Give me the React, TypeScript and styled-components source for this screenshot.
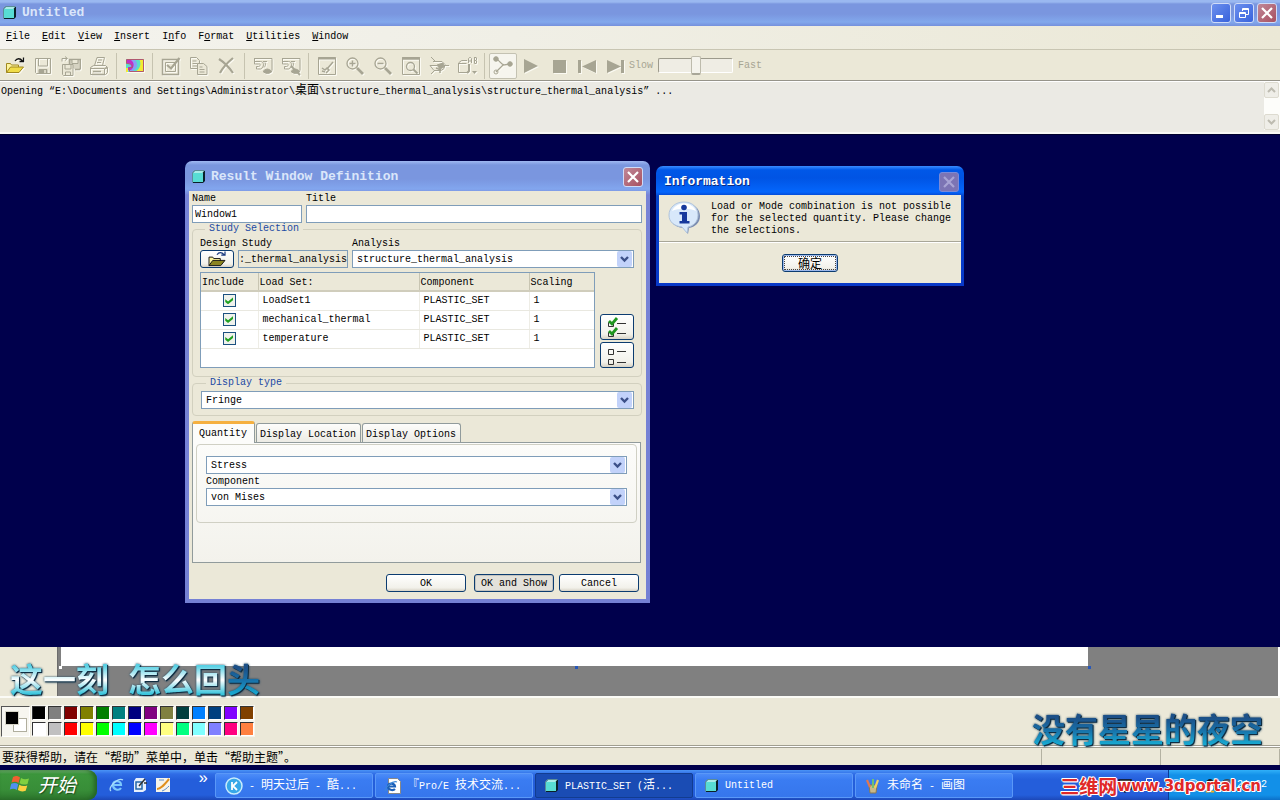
import React from "react";
import styled, { createGlobalStyle, css } from "styled-components";

const MONO = `"Liberation Mono", "Noto Sans CJK SC", monospace`;
const CJK = `"Noto Sans CJK SC", "Liberation Sans", sans-serif`;

const GlobalStyle = createGlobalStyle`
  *, *::before, *::after { box-sizing: border-box; }
  body { margin: 0; background: #00004c; }
  button, input, select { font: inherit; color: inherit; margin: 0; }
`;

/* ---------- text helpers ---------- */

const Han = styled.span`
  font-family: ${CJK};
  font-size: 12px;
  line-height: 12px;
`;

const mixed = (text: string) =>
  text
    .split(/([\u3000-\u30ff\u4e00-\u9fff]+)/)
    .filter(Boolean)
    .map((part, i) => (/[\u3000-\u30ff\u4e00-\u9fff]/.test(part) ? <Han key={i}>{part}</Han> : part));

/* ---------- application shell ---------- */

const Desktop = styled.div`
  display: flex;
  flex-direction: column;
  min-height: 100vh;
  font-family: ${MONO};
  font-size: 10px;
  line-height: 12px;
  color: #000;
`;

const TitleBar = styled.header`
  display: flex;
  align-items: center;
  gap: 3px;
  height: 26px;
  padding: 0 3px;
  background: linear-gradient(#9ab8f0 0, #9ab8f0 2px, #7a96df 4px, #7a96df 14px, #82a8ec 22px, #7590dc 26px);
`;

const TitleText = styled.h1<{ $active?: boolean }>`
  flex: 1;
  margin: 0;
  padding-left: 2px;
  font-size: 13px;
  line-height: 16px;
  font-weight: bold;
  white-space: nowrap;
  color: ${(p) => (p.$active ? "#fff" : "#dae6fa")};
  text-shadow: ${(p) => (p.$active ? "1px 1px 0 #0a2a80" : "none")};
`;

const CaptionButton = styled.button<{ $kind: "blue" | "red" | "dim" }>`
  display: grid;
  place-items: center;
  width: 20px;
  height: 20px;
  padding: 0;
  border: 1px solid ${(p) => (p.$kind === "dim" ? "#7a8ad8" : "#d0dcf8")};
  border-radius: 3px;
  background: ${(p) =>
    p.$kind === "blue"
      ? "linear-gradient(135deg, #6c90ee, #3862dc)"
      : p.$kind === "red"
      ? "linear-gradient(135deg, #c08898, #a85060)"
      : "#7c74b4"};
`;

const MenuBar = styled.nav`
  display: flex;
  align-items: center;
  gap: 12px;
  height: 23px;
  padding: 0 6px 1px;
  background: linear-gradient(90deg, #f4f3ee 0, #f0efe6 40%, #ebe8d6 100%);
`;

const MenuItem = styled.button`
  padding: 0;
  border: 0;
  background: none;
  line-height: 14px;
`;

const ToolBar = styled.div`
  display: flex;
  align-items: center;
  height: 32px;
  padding: 1px 0 0 1px;
  border-top: 1px solid #c8c5b2;
  border-bottom: 1px solid #96948a;
  background: #ebe8d7;
  color: #a7a593;
`;

const ToolButton = styled.button<{ $on?: boolean }>`
  display: grid;
  place-items: center;
  flex: none;
  width: 28px;
  height: 26px;
  padding: 0;
  border: 1px solid ${(p) => (p.$on ? "#c4c2b2" : "transparent")};
  border-radius: 2px;
  background: ${(p) => (p.$on ? "#f6f5ee" : "none")};
  & svg { filter: drop-shadow(1px 1px 0 #fbfaf2); }
`;

const ToolSeparator = styled.span`
  flex: none;
  width: 1px;
  height: 26px;
  margin: 0 4px 0 3px;
  background: #c6c3b0;
`;

const SpeedControl = styled.label`
  display: flex;
  align-items: center;
  gap: 5px;
`;

const SpeedSlider = styled.input`
  appearance: none;
  width: 75px;
  height: 15px;
  background: #efede4;
  border: 1px solid #fff;
  border-top-color: #9c9a8c;
  border-left-color: #9c9a8c;
  border-radius: 2px;
  &::-webkit-slider-thumb {
    appearance: none;
    width: 10px;
    height: 19px;
    border: 1px solid #bdbbac;
    border-bottom: 2px solid #a8a698;
    border-radius: 2px;
    background: #f4f3ec;
  }
`;

const MessageArea = styled.section`
  display: flex;
  justify-content: space-between;
  height: 53px;
  padding-left: 1px;
  border-top: 1px solid #fff;
  border-bottom: 2px solid #f8f8f4;
  background: #ebeae4;
`;

const MessageText = styled.p`
  margin: 1px 0 0;
`;

const ScrollBar = styled.div`
  display: flex;
  flex-direction: column;
  justify-content: space-between;
  width: 16px;
  height: 48px;
  background: #fdfdfa;
`;

const ScrollButton = styled.button`
  display: grid;
  place-items: center;
  width: 15px;
  height: 16px;
  padding: 0;
  border: 1px solid #dddbd0;
  border-radius: 2px;
  background: #efeee8;
`;

const ResultCanvas = styled.main`
  position: relative;
  flex: 1;
  min-height: 480px;
  border-top: 1px solid #00002c;
  background: #00004c;
`;

/* ---------- result window dialog ---------- */

const DialogFrame = styled.section`
  position: absolute;
  left: 185px;
  top: 26px;
  width: 465px;
  padding: 0 4px 4px;
  border-radius: 7px 7px 0 0;
  background: linear-gradient(#a0b8f2 0, #7a96df 4px, #7a96df 18px, #82a6ee 28px, #7783d6 34px, #7480d4 100%);
`;

const DialogTitle = styled.header`
  display: flex;
  align-items: center;
  gap: 3px;
  height: 30px;
  padding: 2px 3px 0 3px;
`;

const DialogBody = styled.form`
  padding: 2px 4px 7px 3px;
  background: #ebe8d8;
`;

const FieldRow = styled.div`
  display: flex;
  align-items: flex-end;
  gap: 4px;
`;

const Field = styled.label<{ $width?: number }>`
  display: flex;
  flex-direction: column;
  flex: ${(p) => (p.$width ? `0 0 ${p.$width}px` : "1")};
  min-width: 0;
`;

const boxed = css`
  width: 100%;
  height: 18px;
  border: 1px solid #7f9db9;
  border-radius: 0;
  outline: 0;
`;

const TextBox = styled.input<{ $muted?: boolean }>`
  ${boxed}
  padding: 0 ${(p) => (p.$muted ? 0 : 2)}px;
  background: ${(p) => (p.$muted ? "#ebe8d8" : "#fff")};
`;

const Group = styled.fieldset<{ $pad: string }>`
  min-width: 0;
  margin: 0;
  padding: ${(p) => p.$pad};
  border: 1px solid #d2d0bf;
  border-radius: 4px;
`;

const Legend = styled.legend`
  margin-left: 5px;
  padding: 0 4px;
  line-height: 12px;
  color: #1c4aa4;
`;

const SelectWrap = styled.span`
  position: relative;
  display: block;
  & svg {
    position: absolute;
    top: 1px;
    right: 2px;
    pointer-events: none;
  }
`;

const SelectBox = styled.select`
  ${boxed}
  display: block;
  appearance: none;
  padding: 2px 20px 0 4px;
  background: #fff;
`;

const PushButton = styled.button<{ $width: number; $height?: number; $pressed?: boolean; $focus?: boolean }>`
  display: grid;
  place-items: center;
  flex: none;
  width: ${(p) => p.$width}px;
  height: ${(p) => p.$height ?? 18}px;
  padding: 0;
  border: 1px solid #0c3c70;
  border-radius: 3px;
  background: ${(p) => (p.$pressed ? "#e3e1da" : "linear-gradient(#fff, #f2f1ea 80%, #d8d3c6)")};
  box-shadow: ${(p) => (p.$focus ? "inset 0 0 0 1px #9cb8ec" : p.$pressed ? "inset 0 0 0 1px #c4c4c0" : "none")};
  outline: ${(p) => (p.$focus ? "1px dotted #444" : "0")};
  outline-offset: -3px;
`;

const LoadArea = styled.div`
  display: flex;
  align-items: flex-end;
  gap: 5px;
  margin-top: 4px;
`;

const LoadTableBox = styled.div`
  flex: 1;
  height: 96px;
  border: 1px solid #7f9db9;
  background: #fff;
`;

const LoadTable = styled.table`
  width: 100%;
  table-layout: fixed;
  border-collapse: collapse;
  & th, & td { padding: 0; text-align: left; font-weight: normal; overflow: hidden; }
  & th {
    height: 18px;
    padding: 2px 0 0 1px;
    background: #ebe8d8;
    border-right: 1px solid #c8c5b2;
    border-bottom: 2px solid #d0cdbc;
  }
  & th:last-child, & td:last-child { border-right: 0; }
  & td {
    height: 19px;
    padding-left: 4px;
    border-right: 1px solid #eeede6;
    border-bottom: 1px solid #e9e8e0;
  }
  & td:first-child { padding: 0; text-align: center; }
`;

const CheckBox = styled.input`
  appearance: none;
  display: inline-grid;
  place-items: center;
  width: 13px;
  height: 13px;
  vertical-align: middle;
  border: 1px solid #1c5180;
  background: #f0f2ec;
  &:checked::after {
    content: "";
    width: 8px;
    height: 7px;
    background: #21a121;
    clip-path: polygon(0 30%, 35% 62%, 100% 0, 100% 40%, 35% 100%, 0 70%);
  }
`;

const SideButtons = styled.div`
  display: flex;
  flex-direction: column;
  gap: 2px;
`;

const Tabs = styled.div`
  display: flex;
  align-items: flex-end;
  gap: 1px;
  height: 21px;
  margin-top: 5px;
`;

const Tab = styled.button<{ $active?: boolean }>`
  height: ${(p) => (p.$active ? 22 : 19)}px;
  margin-bottom: ${(p) => (p.$active ? -1 : 0)}px;
  padding: ${(p) => (p.$active ? "0 7px 0 6px" : "3px 4px 0 3px")};
  border: 1px solid #919b9c;
  border-bottom: 0;
  border-radius: 3px 3px 0 0;
  white-space: nowrap;
  line-height: 12px;
  background: ${(p) => (p.$active ? "#fcfcfa" : "linear-gradient(#fdfdfb, #ecebe4)")};
  ${(p) => p.$active && "border-top: 3px solid #f5b040; position: relative; z-index: 1;"}
`;

const TabPanel = styled.div`
  height: 121px;
  margin-right: 1px;
  padding: 1px 3px;
  border: 1px solid #919b9c;
  background: linear-gradient(#fcfcfa, #f3f2ec);
`;

const QuantityGroup = styled.div`
  display: flex;
  flex-direction: column;
  height: 79px;
  padding: 11px 9px 0;
  border: 1px solid #d0d0c4;
  border-radius: 4px;
`;

const FieldLabel = styled.span`
  display: block;
  padding-top: 2px;
`;

const DialogActions = styled.footer`
  display: flex;
  justify-content: flex-end;
  gap: 5px;
  padding: 11px 3px 0 0;
  & button { padding-top: 1px; }
  & button:nth-child(2) { margin-left: 3px; }
`;

/* ---------- information dialog ---------- */

const InfoFrame = styled.section`
  position: absolute;
  left: 656px;
  top: 31px;
  width: 308px;
  padding: 0 3px 3px;
  border-radius: 7px 7px 0 0;
  background: linear-gradient(#3a8cff 0, #0058e8 4px, #0054e4 12px, #0466fc 26px, #0444cc 30px, #0838c8 100%);
`;

const InfoTitle = styled.header`
  display: flex;
  align-items: center;
  height: 29px;
  padding: 2px 2px 0 3px;
`;

const InfoMessage = styled.div`
  display: flex;
  gap: 9px;
  height: 47px;
  padding: 6px 9px 0;
  border-bottom: 1px solid #a8a698;
  background: #ebe8d8;
  & p { margin: 0; }
`;

const InfoActions = styled.footer`
  display: flex;
  justify-content: center;
  height: 41px;
  padding-top: 11px;
  border-top: 1px solid #fff;
  background: #ebe8d8;
`;

/* ---------- paint window behind ---------- */

const PaintStrip = styled.section`
  display: flex;
  height: 49px;
  background: #808080;
  border-right: 2px solid #fff;
`;

const PaintTools = styled.div`
  width: 58px;
  border-right: 1px solid #6c6c6c;
  background: #ebe8d8;
`;

const PaintWorkspace = styled.div`
  flex: 1;
  padding: 0 190px 0 3px;
`;

const PaintPage = styled.div`
  position: relative;
  height: 19px;
  background: #fff;
`;

const PageHandle = styled.i<{ $side: string; $color?: string }>`
  position: absolute;
  top: 19px;
  ${(p) => p.$side}
  width: 3px;
  height: 3px;
  background: ${(p) => p.$color ?? "#2858b8"};
`;

const ColorBox = styled.section`
  display: flex;
  gap: 2px;
  height: 50px;
  padding: 8px 1px 0;
  border-top: 2px solid #fbfbf6;
  border-bottom: 1px solid #a09e90;
  background: #ebe8d8;
`;

const CurrentColors = styled.div`
  position: relative;
  width: 29px;
  height: 31px;
  border: 1px solid #fff;
  border-top-color: #555;
  border-left-color: #555;
  background: #f7f6f0;
`;

const CurrentColor = styled.span<{ $back?: boolean }>`
  position: absolute;
  left: ${(p) => (p.$back ? 11 : 3)}px;
  top: ${(p) => (p.$back ? 11 : 4)}px;
  width: 14px;
  height: 14px;
  border: 1px solid ${(p) => (p.$back ? "#b0ae9e" : "#d8d6c8")};
  background: ${(p) => (p.$back ? "#fff" : "#000")};
`;

const Swatches = styled.div`
  display: grid;
  grid-template-columns: repeat(14, 14px);
  grid-auto-rows: 14px;
  gap: 2px;
`;

const Swatch = styled.button<{ $color: string }>`
  padding: 0;
  border: 1px solid #fff;
  border-top-color: #333;
  border-left-color: #333;
  outline: 1px solid #f6f5ee;
  background: ${(p) => p.$color};
`;

const StatusBar = styled.div`
  display: flex;
  height: 19px;
  border-top: 1px solid #fff;
  background: #ebe8d8;
  box-shadow: inset 0 1px 0 #a09e90;
  font-family: ${CJK};
  font-size: 12px;
  line-height: 16px;
  white-space: nowrap;
`;

const StatusCell = styled.div<{ $width?: number }>`
  flex: ${(p) => (p.$width ? `0 0 ${p.$width}px` : "1")};
  min-width: 0;
  overflow: hidden;
  margin-top: 2px;
  padding: 0 2px;
  border-right: 1px solid #b4b2a2;
`;

/* ---------- taskbar ---------- */

const TaskBar = styled.footer`
  position: relative;
  display: flex;
  height: 35px;
  border-top: 5px solid #00004c;
  background: linear-gradient(#4a94f6 0, #2f6ce6 4px, #245edb 10px, #245edb 25px, #1c48b8 30px);
  color: #fff;
`;

const StartButton = styled.button`
  display: flex;
  align-items: center;
  gap: 7px;
  flex: none;
  width: 97px;
  height: 30px;
  padding: 0 0 2px 9px;
  border: 0;
  border-radius: 0 9px 9px 0;
  background: linear-gradient(#78b878 0, #3c963c 4px, #388e38 20px, #2c742c 30px);
  box-shadow: inset -3px 0 4px #246424;
  font: italic 19px/24px ${CJK};
  color: #fff;
  text-shadow: 1px 1px 1px #1c4c1c;
`;

const QuickLaunch = styled.div`
  display: flex;
  align-items: center;
  gap: 7px;
  flex: none;
  width: 117px;
  padding-left: 12px;
`;

const MoreMark = styled.span`
  margin-left: auto;
  padding: 0 6px 12px 0;
  font-size: 16px;
`;

const TaskButton = styled.button<{ $active?: boolean }>`
  display: flex;
  align-items: center;
  gap: 6px;
  flex: 0 1 158px;
  min-width: 0;
  height: 25px;
  margin: 3px 1px 0;
  padding: 0 9px;
  overflow: hidden;
  border: 1px solid ${(p) => (p.$active ? "#123c90" : "#5a98f8")};
  border-radius: 2px;
  white-space: nowrap;
  background: ${(p) => (p.$active ? "#1a4cb4" : "linear-gradient(#4c8cf8, #3a7cf2 6px, #3676ec)")};
`;

const Tray = styled.div`
  display: flex;
  align-items: center;
  justify-content: flex-end;
  gap: 3px;
  margin-left: auto;
  padding-right: 13px;
  width: 112px;
  flex: none;
  border-left: 1px solid #0c3c98;
  background: linear-gradient(#30b0f8 0, #1290e8 5px, #1290e8 25px, #0c70c8 30px);
`;

const LanguageBar = styled.div`
  display: flex;
  align-items: center;
  gap: 9px;
  margin-left: auto;
  padding-right: 14px;
  & + div { margin-left: 0; }
`;

const Watermark = styled.div`
  position: absolute;
  right: 19px;
  bottom: 4px;
  display: flex;
  align-items: center;
  font: bold 15px/20px "DejaVu Sans", "Noto Sans CJK SC", sans-serif;
  color: #e02828;
  text-shadow: 1px 0 #fff, -1px 0 #fff, 0 1px #fff, 0 -1px #fff, 1px 1px #fff, -1px -1px #fff;
  & span { font: bold 19px/20px ${CJK}; }
`;

const Lyric = styled.p<{ $side: string; $bottom: number }>`
  position: absolute;
  ${(p) => p.$side}
  bottom: ${(p) => p.$bottom}px;
  display: flex;
  gap: 19px;
  margin: 0;
  font: bold 33px/40px ${CJK};
  white-space: nowrap;
  filter: drop-shadow(1px 1px 0 #102c40) drop-shadow(0 0 1px #204860);
`;

const LyricPart = styled.span<{ $sung?: boolean }>`
  color: transparent;
  background: ${(p) =>
    p.$sung
      ? "linear-gradient(#58d0e4 8px, #ffffff 22px, #38c4dc 36px)"
      : "linear-gradient(#1c5088 10px, #1870a8 22px, #18a8d0 36px)"};
  background-clip: text;
`;

const LyricWord = styled.span`
  display: flex;
`;

const LowerScreen = styled.div`
  position: relative;
`;

/* ---------- drawings ---------- */

const CubeIcon = ({ size = 14 }: { size?: number }) => (
  <svg width={size} height={size} viewBox="0 0 14 14" aria-hidden="true">
    <path d="M3 1h10v10l-2 2H1V3z" fill="#0a2028" />
    <path d="M1 3h10v9H1z" fill="#58dcd4" />
    <path d="M1 3l2-2h9l-1.500 2z" fill="#a8ece8" />
    <path d="M.5 12.500V2.500L2.500.500h10" fill="none" stroke="#5c8c98" />
  </svg>
);

const ComboArrow = () => (
  <svg width="15" height="16" viewBox="0 0 15 16" aria-hidden="true">
    <rect width="15" height="16" rx="2" fill="#c2d2fa" />
    <path d="M4 6l3.500 3.500L11 6" fill="none" stroke="#3c5088" strokeWidth="2.400" />
  </svg>
);

const CloseMark = ({ color = "#fff" }: { color?: string }) => (
  <svg width="12" height="12" viewBox="0 0 12 12" aria-hidden="true">
    <path d="M1 1l10 10M11 1L1 11" stroke={color} strokeWidth="2.200" />
  </svg>
);

const Glyph = ({ children }: { children: React.ReactNode }) => (
  <svg width="20" height="20" viewBox="0 0 20 20" fill="none" stroke="#a7a593" aria-hidden="true">
    {children}
  </svg>
);

const FolderGlyph = ({ dark }: { dark?: boolean }) => (
  <svg width="20" height={dark ? 16 : 20} viewBox={dark ? "0 1 20 17" : "0 0 20 20"} fill="none" aria-hidden="true">
    <path d="M1.500 16.500v-9h4l1 1.500h7v3" stroke={dark ? "#111" : "#a08820"} fill="#fdf49c" />
    <path d="M1.500 16.500l4-5.500h13l-4.500 5.500z" stroke={dark ? "#111" : "#a08820"} fill={dark ? "#8a8420" : "#f0dc48"} />
    <path d="M10 5c2-3 5-3 7.500 0M14.500 5.500h4v-4" stroke={dark ? "#1c3c80" : "#111"} strokeWidth="1.300" />
  </svg>
);

const DisplayShape = () => (
  <>
    <path d="M1 2.500h18v12" />
    <path d="M1.500 5.500h6c4 0 4 6 0 7.500h-4v-2.500h2c3-1 2-3 0-2.500h-4zM12 6.500c1 2 0 4-1 5" />
    <path d="M1.500 3v3M10 5.500h4" />
  </>
);

const toolGroups: { name: string; on?: boolean; art: React.ReactNode }[][] = [
  [
    { name: "Open", art: <FolderGlyph /> },
    {
      name: "Save",
      art: (
        <Glyph>
          <path d="M2.500 2.500h15v15h-14l-1-1z" />
          <path d="M5.500 3v7h9V3" />
          <path d="M6 13.500h8v3.500H6z" fill="#a7a593" />
          <path d="M12 14v3" stroke="#ebe8d7" strokeWidth="1.500" />
        </Glyph>
      ),
    },
    {
      name: "Save a copy",
      art: (
        <Glyph>
          <path d="M8.500 9V3.500h11v9l-1 1H14" fill="#d6d3c2" strokeWidth="1.500" />
          <path d="M11 4v3.500h6V4" fill="#ebe8d7" />
          <path d="M1.500 8.500h10.500v11H2.500l-1-1z" fill="#ebe8d7" />
          <path d="M4 9v4h6V9M4.500 19v-3h5v3" />
          <path d="M1 5.500V2.500h5M4 .5l2.500 2L4 4.500" />
        </Glyph>
      ),
    },
    {
      name: "Print",
      art: (
        <Glyph>
          <path d="M5.500 9.500l2.500-8h7.500l-2 8M9 4h4M8 6.500h4" />
          <path d="M1.500 11.500l3-2h12l2 2v5l-2 2h-15z" />
          <path d="M1.500 12.500h14v5.500" />
          <path d="M4 15.500h8M16 12.500l2.500-1M3 18.500h13" strokeWidth="1.500" />
        </Glyph>
      ),
    },
  ],
  [
    {
      name: "Result window",
      art: (
        <svg width="20" height="16" viewBox="0 0 20 16" aria-hidden="true">
          <path d="M1 1h18v13H1z" fill="#f2ec30" />
          <path d="M1 1h13c3 5 1 10-4 13H3v-4H1z" fill="#58e0c8" />
          <path d="M1 2h9c4 4 2 9-2 11H3v-3h3z" fill="#88a0f4" />
          <path d="M1 2h5c4 3 3 8 0 10H3v-3h3c1-2 0-4-5-4z" fill="#c030c8" />
          <path d="M1.500 5.500V1.500h17v12H4.500V9.500h3c0-3-2-4-6-4z" fill="none" stroke="#b05870" />
        </svg>
      ),
    },
  ],
  [
    {
      name: "Edit definition",
      art: (
        <Glyph>
          <path d="M1.500 3.500h16v15h-16z" strokeWidth="1.500" />
          <path d="M4.500 6.500h10v9h-10z" />
          <path d="M6 9l4 3.500L18.500 2" strokeWidth="2.200" />
        </Glyph>
      ),
    },
    {
      name: "Copy",
      art: (
        <Glyph>
          <path d="M1.500 1.500h6l3 3v8h-9zM3.500 5h4M3.500 7.500h5M3.500 10h5" />
          <path d="M8.500 7.500h6l3.500 3v8H8.500z" fill="#ebe8d7" />
          <path d="M10.500 11h3M10.500 13.500h5M10.500 16h5" />
        </Glyph>
      ),
    },
    { name: "Delete", art: <Glyph><path d="M2 3c6 4 10 8 14 14M16 2C10 7 6 11 3 17" strokeWidth="2.200" /></Glyph> },
  ],
  [
    {
      name: "Show",
      art: (
        <Glyph>
          <DisplayShape />
          <path d="M10 15.500q4-5 9 0q-4.500 4-9 0z" fill="#a7a593" />
        </Glyph>
      ),
    },
    {
      name: "Hide",
      art: (
        <Glyph>
          <DisplayShape />
          <path d="M10 15.500q4-5 9 0q-4.500 4-9 0z" fill="#a7a593" />
          <path d="M10 10l9 9" strokeWidth="1.800" />
        </Glyph>
      ),
    },
  ],
  [
    {
      name: "Repaint",
      art: (
        <Glyph>
          <path d="M1.500 1.500h17v17h-17z" />
          <path d="M1 2.500h18" strokeWidth="2" />
          <path d="M16 6l-6 7" strokeWidth="1.500" />
          <path d="M5 12l3 2 2-2 2 2-3 3M5 15l3 1" strokeWidth="1.500" />
        </Glyph>
      ),
    },
    {
      name: "Zoom in",
      art: (
        <Glyph>
          <circle cx="7.500" cy="7.500" r="5.500" strokeWidth="1.300" />
          <path d="M4.500 7.500h6M7.500 4.500v6" strokeWidth="1.500" />
          <path d="M12 12l6 6" strokeWidth="2.800" />
        </Glyph>
      ),
    },
    {
      name: "Zoom out",
      art: (
        <Glyph>
          <circle cx="7.500" cy="7.500" r="5.500" strokeWidth="1.300" />
          <path d="M4.500 7.500h6" strokeWidth="1.500" />
          <path d="M12 12l6 6" strokeWidth="2.800" />
        </Glyph>
      ),
    },
    {
      name: "Refit",
      art: (
        <Glyph>
          <path d="M1.500 1.500h17v17h-17z" />
          <path d="M1 2.500h18" strokeWidth="2.500" />
          <circle cx="9.500" cy="10.500" r="4" strokeWidth="1.300" />
          <path d="M12.500 13.500l4 4" strokeWidth="2" />
        </Glyph>
      ),
    },
    {
      name: "Reorient",
      art: (
        <Glyph>
          <path d="M2 1l5 5M2 18l4-4M15 9.500h5" />
          <path d="M4 5.500h9l3 3-1 4-3 2H5l-4-5h7" />
          <path d="M8 9l6-2 1 4-4 2z" fill="#a7a593" />
          <path d="M7 12l5 2M11 14v3" strokeWidth="1.500" />
        </Glyph>
      ),
    },
    {
      name: "Saved views",
      art: (
        <Glyph>
          <path d="M10 4.500H4.500L1.500 7v9.500h10V9M1.500 7.500h8" />
          <path d="M12 8v7l-2 2" strokeWidth="2" />
          <path d="M11.500 7V2.500l1-1h1l1 1V7M11.500 5h3" />
          <path d="M17.500 1.500h2M17.500 1v6.500h2M17.500 4.500h2M19.500 2v2M19.500 5v2" />
          <path d="M15 15h5l-2.500 3z" fill="#a7a593" stroke="none" />
        </Glyph>
      ),
    },
  ],
  [
    {
      name: "Animate",
      on: true,
      art: (
        <Glyph>
          <path d="M3 3c5 2 4 5 8 6M3 16l7-7 7-1" strokeWidth="1.300" />
          <circle cx="3" cy="3" r="2.300" fill="#a7a593" />
          <circle cx="17" cy="8" r="2.300" fill="#a7a593" />
          <circle cx="3" cy="16" r="2" />
        </Glyph>
      ),
    },
    { name: "Play", art: <Glyph><path d="M3 3v14l14-7z" fill="#a7a593" stroke="none" /></Glyph> },
    { name: "Stop", art: <Glyph><path d="M4 4h13v13H4z" fill="#a7a593" stroke="none" /></Glyph> },
    { name: "Previous frame", art: <Glyph><path d="M1 4h3v13H1zM19 4v13L5 10.500z" fill="#a7a593" stroke="none" /></Glyph> },
    { name: "Next frame", art: <Glyph><path d="M16 4h3v13h-3zM2 4v13l14-6.500z" fill="#a7a593" stroke="none" /></Glyph> },
  ],
];

const InfoIcon = () => (
  <svg width="34" height="36" viewBox="0 0 34 36" aria-hidden="true">
    <path d="M17 2c9 0 15 6 15 13s-5 11-11 12l-1 6-5-6C7 26 2 22 2 15S8 2 17 2z" fill="#7a8cb0" />
    <path d="M16 1c9 0 14 6 14 13s-5 11-10 12l-1 6-5-6C6 25 1 21 1 14S7 1 16 1z" fill="#d8e8fa" stroke="#b0c4dc" />
    <path d="M4 10c4-10 20-10 24 0-6-3-18-3-24 0z" fill="#fff" />
    <circle cx="16" cy="6.500" r="2.800" fill="#16389c" />
    <path d="M11.500 11H19v9h2.500v2.500h-10V20H14v-6.500h-2.500z" fill="#16389c" />
  </svg>
);

const SelectAllIcon = () => (
  <svg width="20" height="22" viewBox="0 0 20 22" fill="none" aria-hidden="true">
    <path d="M1.500 6.500h5v4h-5zM1.500 16.500h5v4h-5z" stroke="#333" />
    <path d="M10 7.500h9M10 17.500h9" stroke="#333" />
    <path d="M2 5l3 3 5-6M2 15l3 3 5-6" stroke="#1e961e" strokeWidth="2.800" />
  </svg>
);

const ClearAllIcon = () => (
  <svg width="20" height="22" viewBox="0 0 20 22" fill="none" stroke="#333" aria-hidden="true">
    <path d="M1.500 5.500h5v5h-5zM1.500 15.500h5v5h-5zM10 7.500h9M10 18.500h9" />
  </svg>
);

const WindowsFlag = () => (
  <svg width="22" height="20" viewBox="0 0 22 20" aria-hidden="true">
    <path d="M4 3c3-1.500 5-1 7 .5L9.500 9C7.500 7.500 5 7.500 2.500 8.500z" fill="#f06030" />
    <path d="M12 4c2.500 1.500 5 1.500 8 .5L18.500 10c-3 1-5.500.8-8-.7z" fill="#80d040" />
    <path d="M2.200 9.800c2.500-1 5-1 7 .5L7.800 16c-2-1.500-4.500-1.500-7-.5z" fill="#5090f0" />
    <path d="M10.300 10.800c2.500 1.500 5 1.500 8 .6l-1.600 5.400c-3 1-5.400.8-7.900-.7z" fill="#fcd040" />
  </svg>
);

const BrowserIcon = ({ page }: { page?: boolean }) => (
  <svg width="16" height="16" viewBox="0 0 16 16" fill="none" aria-hidden="true">
    {page && <path d="M3.500.500h9l3 3v12h-12z" fill="#fff" stroke="#888" />}
    <path d={page ? "M10 11c-2 2-7 1-7-2.500s7-4 7 0H4" : "M12 11c-2 3-8 2-8-3s8-5 8 0H5"} stroke={page ? "#1c60b8" : "#7cc8fc"} strokeWidth="2.200" />
    <path d={page ? "M1 13C-1 10 8 2 12 4" : "M2 14C-2 11 9 0 14 3"} stroke={page ? "#3c88d8" : "#a8dcfc"} strokeWidth="1.300" />
  </svg>
);

const DesktopIcon = () => (
  <svg width="16" height="16" viewBox="0 0 16 16" fill="none" aria-hidden="true">
    <path d="M4 1h8l2 3v9l-3 2H2V4z" fill="#e8f0fc" />
    <path d="M4 5h6v7H4z" stroke="#2468a8" strokeWidth="1.500" />
    <path d="M7 9l6-7M12 6h3" stroke="#333" strokeWidth="1.500" />
  </svg>
);

const NotesIcon = () => (
  <svg width="16" height="16" viewBox="0 0 16 16" fill="none" aria-hidden="true">
    <path d="M1 1h14v14H1z" fill="#f6f4ea" />
    <path d="M2 12C6 12 9 8 14 2" stroke="#e0901c" strokeWidth="2" />
    <path d="M4 3h5M7 14c3-1 5-3 7-5" stroke="#6090c8" />
  </svg>
);

const PlayerIcon = () => (
  <svg width="18" height="18" viewBox="0 0 18 18" fill="none" aria-hidden="true">
    <circle cx="9" cy="9" r="8" fill="#38a8e8" stroke="#c8ecfc" strokeWidth="1.500" />
    <path d="M7 5v8M12 5L8 9l4 4" stroke="#fff" strokeWidth="1.800" />
  </svg>
);

const PaintIcon = () => (
  <svg width="16" height="16" viewBox="0 0 16 16" fill="none" aria-hidden="true">
    <path d="M4 7h8l-1 8H5z" fill="#c8b888" stroke="#887850" />
    <path d="M5 9L2 2" stroke="#e07850" strokeWidth="2.200" />
    <path d="M8 10V1" stroke="#70c070" strokeWidth="2" />
    <path d="M10 10l3-8" stroke="#f0d060" strokeWidth="2.200" />
  </svg>
);

const TrayOrb = ({ fill, ring }: { fill: string; ring: string }) => (
  <svg width="15" height="15" viewBox="0 0 15 15" fill="none" aria-hidden="true">
    <circle cx="7.500" cy="7.500" r="6.500" fill={fill} stroke={ring} />
    <path d="M9 4L6 7.500 9 11" stroke="#fff" strokeWidth="1.500" />
  </svg>
);

const PenguinIcon = () => (
  <svg width="15" height="15" viewBox="0 0 15 15" aria-hidden="true">
    <ellipse cx="7.500" cy="7" rx="5" ry="6.500" fill="#181818" />
    <ellipse cx="7.500" cy="10" rx="3.500" ry="3.500" fill="#fff" />
    <path d="M5 4.500h5L7.500 7zM3 13h4v2H3zM8 13h4v2H8z" fill="#f4b020" />
  </svg>
);

/* ---------- composed parts ---------- */

const Combo = ({ label, value }: { label: string; value: string }) => (
  <SelectWrap>
    <SelectBox aria-label={label} defaultValue={value}>
      <option>{value}</option>
    </SelectBox>
    <ComboArrow />
  </SelectWrap>
);

const menus: [string, string, string][] = [
  ["", "F", "ile"],
  ["", "E", "dit"],
  ["", "V", "iew"],
  ["", "I", "nsert"],
  ["I", "n", "fo"],
  ["F", "o", "rmat"],
  ["", "U", "tilities"],
  ["", "W", "indow"],
];

const loadSets = ["LoadSet1", "mechanical_thermal", "temperature"];

const palette = [
  "#000000", "#808080", "#800000", "#808000", "#008000", "#008080", "#000080",
  "#800080", "#808040", "#004040", "#0080ff", "#004080", "#8000ff", "#804000",
  "#ffffff", "#c0c0c0", "#ff0000", "#ffff00", "#00ff00", "#00ffff", "#0000ff",
  "#ff00ff", "#ffff80", "#00ff80", "#80ffff", "#8080ff", "#ff0080", "#ff8040",
];

const tasks: { text: string; icon: React.ReactNode; active?: boolean }[] = [
  { text: "- 明天过后 - 酷...", icon: <PlayerIcon /> },
  { text: "『Pro/E 技术交流...", icon: <BrowserIcon page /> },
  { text: "PLASTIC_SET (活...", icon: <CubeIcon />, active: true },
  { text: "Untitled", icon: <CubeIcon /> },
  { text: "未命名 - 画图", icon: <PaintIcon /> },
];

const ResultDialog = () => (
  <DialogFrame role="dialog" aria-label="Result Window Definition">
    <DialogTitle>
      <CubeIcon />
      <TitleText as="h2">Result Window Definition</TitleText>
      <CaptionButton $kind="red" aria-label="Close">
        <CloseMark />
      </CaptionButton>
    </DialogTitle>
    <DialogBody onSubmit={(e) => e.preventDefault()}>
      <FieldRow>
        <Field $width={110}>
          Name
          <TextBox defaultValue="Window1" />
        </Field>
        <Field>
          Title
          <TextBox defaultValue="" />
        </Field>
      </FieldRow>
      <Group $pad="3px 7px 8px">
        <Legend>Study Selection</Legend>
        <FieldRow>
          <Field as="div" $width={148}>
            <label htmlFor="study">Design Study</label>
            <FieldRow>
              <PushButton type="button" $width={34} aria-label="Open design study">
                <FolderGlyph dark />
              </PushButton>
              <TextBox id="study" $muted readOnly value=":_thermal_analysis" />
            </FieldRow>
          </Field>
          <Field>
            Analysis
            <Combo label="Analysis" value="structure_thermal_analysis" />
          </Field>
        </FieldRow>
        <LoadArea>
          <LoadTableBox>
            <LoadTable>
              <colgroup>
                <col width="57" />
                <col width="161" />
                <col width="110" />
                <col />
              </colgroup>
              <thead>
                <tr>
                  <th>Include</th>
                  <th>Load Set:</th>
                  <th>Component</th>
                  <th>Scaling</th>
                </tr>
              </thead>
              <tbody>
                {loadSets.map((name) => (
                  <tr key={name}>
                    <td>
                      <CheckBox type="checkbox" defaultChecked aria-label={`Include ${name}`} />
                    </td>
                    <td>{name}</td>
                    <td>PLASTIC_SET</td>
                    <td>1</td>
                  </tr>
                ))}
              </tbody>
            </LoadTable>
          </LoadTableBox>
          <SideButtons>
            <PushButton type="button" $width={34} $height={26} aria-label="Select all">
              <SelectAllIcon />
            </PushButton>
            <PushButton type="button" $width={34} $height={26} aria-label="Clear all">
              <ClearAllIcon />
            </PushButton>
          </SideButtons>
        </LoadArea>
      </Group>
      <Group $pad="2px 7px 6px 8px">
        <Legend>Display type</Legend>
        <Combo label="Display type" value="Fringe" />
      </Group>
      <Tabs role="tablist">
        <Tab type="button" role="tab" aria-selected $active>
          Quantity
        </Tab>
        <Tab type="button" role="tab">Display Location</Tab>
        <Tab type="button" role="tab">Display Options</Tab>
      </Tabs>
      <TabPanel role="tabpanel">
        <QuantityGroup>
          <Combo label="Quantity" value="Stress" />
          <Field as="label">
            <FieldLabel>Component</FieldLabel>
            <Combo label="Component" value="von Mises" />
          </Field>
        </QuantityGroup>
      </TabPanel>
      <DialogActions>
        <PushButton type="button" $width={80}>OK</PushButton>
        <PushButton type="button" $width={80} $pressed>OK and Show</PushButton>
        <PushButton type="button" $width={80}>Cancel</PushButton>
      </DialogActions>
    </DialogBody>
  </DialogFrame>
);

const InformationDialog = () => (
  <InfoFrame role="alertdialog" aria-label="Information">
    <InfoTitle>
      <TitleText as="h2" $active>Information</TitleText>
      <CaptionButton $kind="dim" aria-label="Close">
        <CloseMark color="#a8a4d4" />
      </CaptionButton>
    </InfoTitle>
    <InfoMessage>
      <InfoIcon />
      <p>
        Load or Mode combination is not possible
        <br />
        for the selected quantity. Please change
        <br />
        the selections.
      </p>
    </InfoMessage>
    <InfoActions>
      <PushButton $width={56} $focus>
        <Han>确定</Han>
      </PushButton>
    </InfoActions>
  </InfoFrame>
);

export default function App() {
  return (
    <Desktop>
      <GlobalStyle />
      <TitleBar>
        <CubeIcon />
        <TitleText>Untitled</TitleText>
        <CaptionButton $kind="blue" aria-label="Minimize">
          <svg width="12" height="12" viewBox="0 0 12 12" aria-hidden="true">
            <path d="M1 8h7v3H1z" fill="#fff" />
          </svg>
        </CaptionButton>
        <CaptionButton $kind="blue" aria-label="Restore">
          <svg width="12" height="12" viewBox="0 0 12 12" fill="none" stroke="#fff" aria-hidden="true">
            <path d="M4.500 4V1.500h6v6H8M1.500 5.500h6v5h-6zM4 2.500h7M1 6.500h7" />
          </svg>
        </CaptionButton>
        <CaptionButton $kind="red" aria-label="Close">
          <CloseMark />
        </CaptionButton>
      </TitleBar>
      <MenuBar>
        {menus.map(([before, key, after]) => (
          <MenuItem key={before + key + after}>
            {before}
            <u>{key}</u>
            {after}
          </MenuItem>
        ))}
      </MenuBar>
      <ToolBar>
        {toolGroups.map((group, i) => (
          <React.Fragment key={i}>
            {i > 0 && <ToolSeparator />}
            {group.map((tool) => (
              <ToolButton key={tool.name} aria-label={tool.name} $on={tool.on}>
                {tool.art}
              </ToolButton>
            ))}
          </React.Fragment>
        ))}
        <SpeedControl>
          Slow
          <SpeedSlider type="range" defaultValue={50} aria-label="Animation speed" />
          Fast
        </SpeedControl>
      </ToolBar>
      <MessageArea>
        <MessageText>
          {mixed(
            "Opening “E:\\Documents and Settings\\Administrator\\桌面\\structure_thermal_analysis\\structure_thermal_analysis” ..."
          )}
        </MessageText>
        <ScrollBar>
          <ScrollButton aria-label="Scroll up">
            <svg width="9" height="6" viewBox="0 0 9 6" fill="none" stroke="#bdbbb0" strokeWidth="2" aria-hidden="true">
              <path d="M1 5l3.500-3.500L8 5" />
            </svg>
          </ScrollButton>
          <ScrollButton aria-label="Scroll down">
            <svg width="9" height="6" viewBox="0 0 9 6" fill="none" stroke="#bdbbb0" strokeWidth="2" aria-hidden="true">
              <path d="M1 1l3.500 3.500L8 1" />
            </svg>
          </ScrollButton>
        </ScrollBar>
      </MessageArea>
      <ResultCanvas>
        <ResultDialog />
        <InformationDialog />
      </ResultCanvas>
      <LowerScreen>
        <PaintStrip>
          <PaintTools />
          <PaintWorkspace>
            <PaintPage>
              <PageHandle $side="left: -2px;" $color="#fff" />
              <PageHandle $side="left: 50%;" />
              <PageHandle $side="right: -3px;" />
            </PaintPage>
          </PaintWorkspace>
        </PaintStrip>
        <ColorBox>
          <CurrentColors>
            <CurrentColor $back />
            <CurrentColor />
          </CurrentColors>
          <Swatches>
            {palette.map((c) => (
              <Swatch key={c} $color={c} aria-label={c} />
            ))}
          </Swatches>
        </ColorBox>
        <StatusBar>
          <StatusCell>要获得帮助，请在“帮助”菜单中，单击“帮助主题”。</StatusCell>
          <StatusCell $width={119} />
          <StatusCell $width={119} />
        </StatusBar>
        <TaskBar>
          <StartButton>
            <WindowsFlag />
            开始
          </StartButton>
          <QuickLaunch>
            <BrowserIcon />
            <DesktopIcon />
            <NotesIcon />
            <MoreMark>»</MoreMark>
          </QuickLaunch>
          {tasks.map((task) => (
            <TaskButton key={task.text} $active={task.active}>
              {task.icon}
              <span>{mixed(task.text)}</span>
            </TaskButton>
          ))}
          <LanguageBar>
            <svg width="16" height="16" viewBox="0 0 16 16" aria-hidden="true">
              <path d="M2 3h12v9l-6 3-6-3z" fill="#fff" stroke="#111" strokeWidth="1.500" />
            </svg>
            <svg width="12" height="16" viewBox="0 0 12 16" fill="none" stroke="#fff" aria-hidden="true">
              <path d="M4.500 1.500h6v4h-6zM1.500 9.500h5v4h-5z" />
            </svg>
          </LanguageBar>
          <Tray>
            <TrayOrb fill="#4c98f0" ring="#b8e0fc" />
            <TrayOrb fill="#58b8f4" ring="#d8f0fc" />
            <PenguinIcon />
            <TrayOrb fill="#586880" ring="#384858" />
            <span>21:02</span>
          </Tray>
          <Watermark>
            <span>三维网</span>www.3dportal.cn
          </Watermark>
        </TaskBar>
        <Lyric $side="left: 10px;" $bottom={102}>
          <LyricPart $sung>这一刻</LyricPart>
          <LyricWord>
            <LyricPart $sung>怎么回</LyricPart>
            <LyricPart>头</LyricPart>
          </LyricWord>
        </Lyric>
        <Lyric $side="right: 17px;" $bottom={52}>
          <LyricPart>没有星星的夜空</LyricPart>
        </Lyric>
      </LowerScreen>
    </Desktop>
  );
}
